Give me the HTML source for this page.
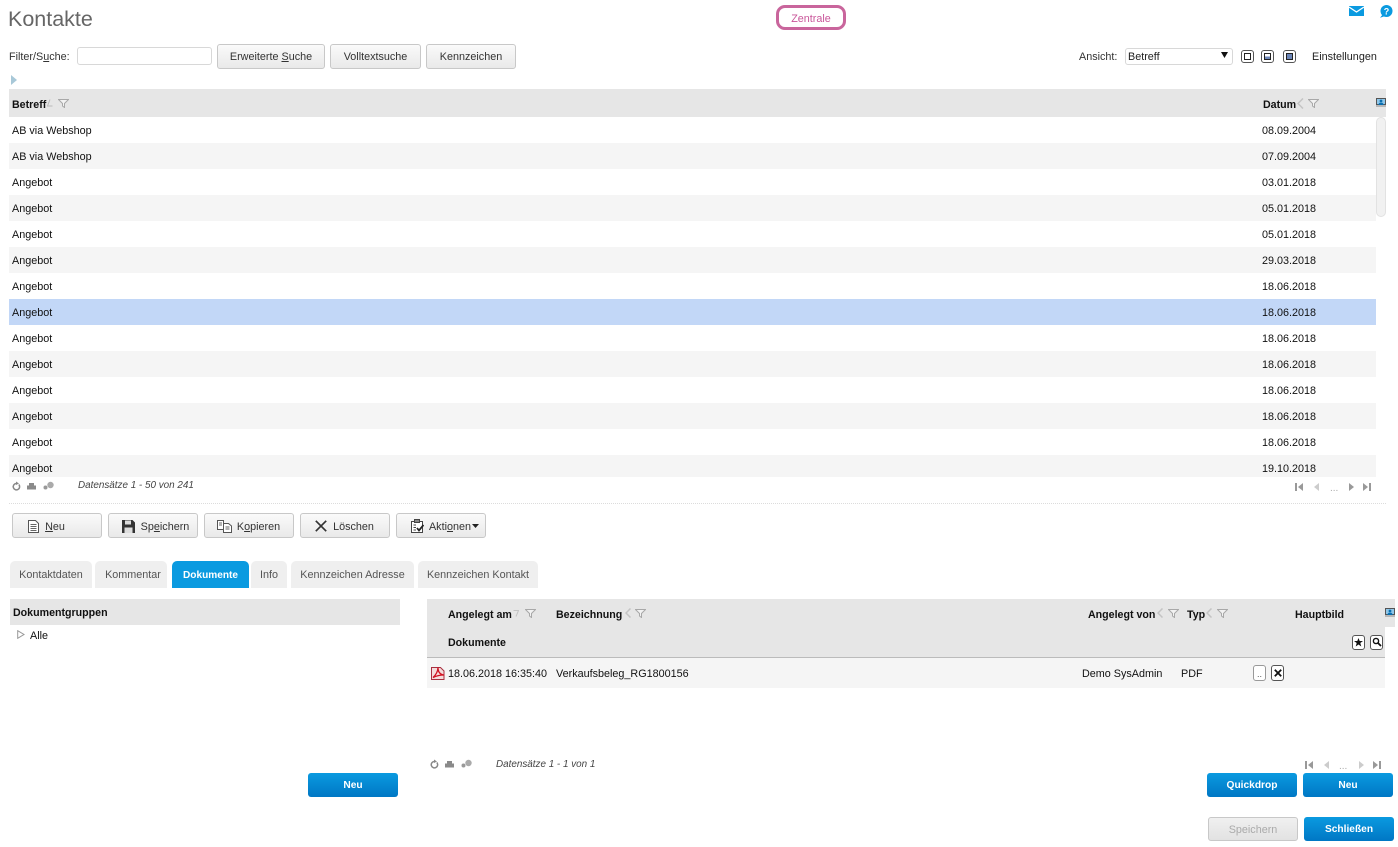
<!DOCTYPE html>
<html lang="de"><head><meta charset="utf-8"><title>Kontakte</title>
<style>
html,body{margin:0;padding:0;background:#fff}
body{width:1398px;height:847px;position:relative;overflow:hidden;font-family:"Liberation Sans",Arial,sans-serif;font-size:10.8px;color:#111}
.a,.t,.b,.r,.tab,.bb{position:absolute}
.t{white-space:nowrap;line-height:14px;height:14px;margin-top:1px}
.h{font-weight:bold;color:#111;font-size:10.65px}
.i{font-style:italic;font-size:10.05px;color:#444}
.b{box-sizing:border-box;height:25px;border:1px solid #c8c8c8;border-radius:3px;background:linear-gradient(#fafafa,#e9e9e9);color:#333;text-align:center;line-height:25px;white-space:nowrap}
.b.m{line-height:26px}
.bb{box-sizing:border-box;height:24px;border-radius:3px;background:linear-gradient(#0a9ae0,#0077c4);color:#fff;font-weight:bold;font-size:10.2px;text-align:center;line-height:25px;white-space:nowrap}
.r{left:9px;width:1367px;height:26px}
.r.o{background:#f5f5f5}
.r.s{background:#c2d7f7}
.tab{top:561px;height:27px;box-sizing:border-box;background:#efefef;color:#555;border-radius:5px 5px 0 0;text-align:center;line-height:29px;white-space:nowrap}
.ib{position:absolute;box-sizing:border-box;border:1px solid #555;border-radius:3px;background:#fff}
svg{position:absolute;display:block}
u{text-decoration:underline}
</style></head><body>

<div class="t" style="left:8px;top:6px;height:26px;line-height:26px;font-size:21.5px;color:#666;margin-top:0">Kontakte</div>
<div class="a" style="left:776px;top:5px;width:70px;height:25px;box-sizing:border-box;border:3px solid #c9659c;border-radius:9px;text-align:center;line-height:23px;color:#c9569a">Zentrale</div>

<svg style="left:1349px;top:6px" width="15" height="10" viewBox="0 0 15 10"><path d="M0 0H15V10H0Z" fill="#0a9ae0"/><path d="M0 1L7.5 6L15 1" fill="none" stroke="#fff" stroke-width="1.3"/></svg>
<svg style="left:1379px;top:5px" width="14" height="13" viewBox="0 0 14 13"><circle cx="7.500" cy="6" r="6" fill="#0a9ae0"/><path d="M4 9L1 12.800L6.500 11Z" fill="#0a9ae0"/><text x="7.500" y="9.500" font-size="9" font-weight="bold" text-anchor="middle" fill="#fff" font-family="Liberation Sans">?</text></svg>

<div class="t" style="left:9px;top:49px;color:#333">Filter/S<u>u</u>che:</div>
<div class="a" style="left:77px;top:47px;width:135px;height:18px;box-sizing:border-box;border:1px solid #d8d8d8;border-radius:3px"></div>
<div class="b" style="left:217px;top:44px;width:108px">Erweiterte <u>S</u>uche</div>
<div class="b" style="left:330px;top:44px;width:91px">Volltextsuche</div>
<div class="b" style="left:426px;top:44px;width:90px">Kennzeichen</div>

<div class="t" style="left:1079px;top:49px;color:#333">Ansicht:</div>
<div class="a" style="left:1125px;top:48px;width:108px;height:17px;box-sizing:border-box;border:1px solid #d8d8d8;border-radius:3px;line-height:16px;padding-left:2px;color:#222">Betreff</div>
<svg style="left:1221px;top:52px" width="7" height="6" viewBox="0 0 7 6"><path d="M0 0H7L3.500 6Z" fill="#111"/></svg>
<div class="ib" style="left:1241px;top:50px;width:13px;height:13px"><div class="a" style="left:2px;top:2px;width:7px;height:7px;border:1px solid #222;box-sizing:border-box"></div></div>
<div class="ib" style="left:1261px;top:50px;width:13px;height:13px"><div class="a" style="left:2px;top:2px;width:7px;height:7px;border:1px solid #222;box-sizing:border-box;background:linear-gradient(#fff 50%,#6c86b8 50%)"></div></div>
<div class="ib" style="left:1283px;top:50px;width:13px;height:13px"><div class="a" style="left:2px;top:2px;width:7px;height:7px;border:1px solid #222;box-sizing:border-box;background:#6c86b8"></div></div>
<div class="t" style="left:1312px;top:49px;color:#222">Einstellungen</div>

<svg style="left:11px;top:75px" width="6" height="10" viewBox="0 0 6 10"><path d="M0 0L6 5L0 10Z" fill="#a8c8d8"/></svg>

<div class="a" style="left:9px;top:89px;width:1377px;height:28px;background:#e6e6e6"></div>
<div class="t h" style="left:12px;top:97px">Betreff</div>
<svg style="left:47px;top:99px" width="6" height="8" viewBox="0 0 6 8"><path d="M3 0.500L0.500 7H5.500" fill="none" stroke="#bbb"/></svg>
<svg style="left:58px;top:99px" width="11" height="9" viewBox="0 0 11 9"><path d="M0.500 0.500H10.500L6.500 4.500V8.500L4.500 7V4.500Z" fill="#f2f2f2" stroke="#a8a8a8"/></svg>
<div class="t h" style="left:1263px;top:97px">Datum</div>
<svg style="left:1297px;top:98px" width="8" height="11" viewBox="0 0 8 11"><path d="M6 0.500L1 5.500L6 10.500" fill="none" stroke="#c4c4c4" stroke-width="1.500"/></svg>
<svg style="left:1308px;top:99px" width="11" height="9" viewBox="0 0 11 9"><path d="M0.500 0.500H10.500L6.500 4.500V8.500L4.500 7V4.500Z" fill="#f2f2f2" stroke="#a8a8a8"/></svg>
<svg style="left:1376px;top:98px" width="10" height="9" viewBox="0 0 10 9"><path d="M0 0H10V7H0Z" fill="#555"/><path d="M1 1H9V6H1Z" fill="#8fc6e8"/><circle cx="5" cy="3" r="1.400" fill="#0a6fb0"/><path d="M2 7L3.500 4.800H6.500L8 7Z" fill="#0a6fb0"/><path d="M0 8H10" stroke="#888"/></svg>

<div class="a" style="left:1376px;top:117px;width:10px;height:360px;background:#fff"></div>
<div class="a" style="left:1376px;top:117px;width:10px;height:100px;box-sizing:border-box;border:1px solid #e2e2e2;border-radius:5px;background:#f1f1f1"></div>

<div class="a" style="left:0;top:117px;width:1376px;height:360px;overflow:hidden">
<div class="r" style="top:0"></div><div class="t" style="left:12px;top:6px">AB via Webshop</div><div class="t" style="left:1262px;top:6px">08.09.2004</div>
<div class="r o" style="top:26px"></div><div class="t" style="left:12px;top:32px">AB via Webshop</div><div class="t" style="left:1262px;top:32px">07.09.2004</div>
<div class="r" style="top:52px"></div><div class="t" style="left:12px;top:58px">Angebot</div><div class="t" style="left:1262px;top:58px">03.01.2018</div>
<div class="r o" style="top:78px"></div><div class="t" style="left:12px;top:84px">Angebot</div><div class="t" style="left:1262px;top:84px">05.01.2018</div>
<div class="r" style="top:104px"></div><div class="t" style="left:12px;top:110px">Angebot</div><div class="t" style="left:1262px;top:110px">05.01.2018</div>
<div class="r o" style="top:130px"></div><div class="t" style="left:12px;top:136px">Angebot</div><div class="t" style="left:1262px;top:136px">29.03.2018</div>
<div class="r" style="top:156px"></div><div class="t" style="left:12px;top:162px">Angebot</div><div class="t" style="left:1262px;top:162px">18.06.2018</div>
<div class="r s" style="top:182px"></div><div class="t" style="left:12px;top:188px">Angebot</div><div class="t" style="left:1262px;top:188px">18.06.2018</div>
<div class="r" style="top:208px"></div><div class="t" style="left:12px;top:214px">Angebot</div><div class="t" style="left:1262px;top:214px">18.06.2018</div>
<div class="r o" style="top:234px"></div><div class="t" style="left:12px;top:240px">Angebot</div><div class="t" style="left:1262px;top:240px">18.06.2018</div>
<div class="r" style="top:260px"></div><div class="t" style="left:12px;top:266px">Angebot</div><div class="t" style="left:1262px;top:266px">18.06.2018</div>
<div class="r o" style="top:286px"></div><div class="t" style="left:12px;top:292px">Angebot</div><div class="t" style="left:1262px;top:292px">18.06.2018</div>
<div class="r" style="top:312px"></div><div class="t" style="left:12px;top:318px">Angebot</div><div class="t" style="left:1262px;top:318px">18.06.2018</div>
<div class="r o" style="top:338px"></div><div class="t" style="left:12px;top:344px">Angebot</div><div class="t" style="left:1262px;top:344px">19.10.2018</div>
</div>

<svg style="left:11px;top:481px" width="50" height="11" viewBox="0 0 50 11"><path d="M7.800 3.500A3.200 3.200 0 1 1 5 2.500" fill="none" stroke="#888" stroke-width="1.500"/><path d="M5 0.500L8 2.500L5 4Z" fill="#888"/><path d="M16 4.500H25V8.500H16Z M18 2H23V4.500H18Z" fill="#8a8a8a"/><circle cx="34.500" cy="6.500" r="2" fill="#999"/><circle cx="39.500" cy="4" r="3.200" fill="#aaa"/></svg>
<div class="t i" style="left:78px;top:478px;margin-top:1px;font-size:9.9px">Datensätze 1 - 50 von 241</div>
<svg style="left:1295px;top:483px" width="78" height="8" viewBox="0 0 78 8"><path d="M0 0H2V8H0Z M8 0V8L3 4Z" fill="#999"/><path d="M24 0V8L19 4Z" fill="#ccc"/><path d="M54 0V8L59 4Z" fill="#999"/><path d="M68 0V8L73 4Z M74 0H76V8H74Z" fill="#999"/></svg>
<div class="t" style="left:1330px;top:481px;color:#aaa;font-size:10px">...</div>

<div class="a" style="left:9px;top:503px;width:1377px;border-top:1px dotted #dcdcdc"></div>

<div class="b m" style="left:12px;top:513px;width:90px;padding-right:4px"><u>N</u>eu</div>
<svg style="left:28px;top:520px" width="11" height="13" viewBox="0 0 11 13"><path d="M0.500 0.500H7.500L10.500 3.500V12.500H0.500Z" fill="#fff" stroke="#555"/><path d="M2.500 4.500H8.500M2.500 6.500H8.500M2.500 8.500H8.500M2.500 10.500H8.500" stroke="#666"/></svg>
<div class="b m" style="left:108px;top:513px;width:90px;padding-left:24px">Sp<u>e</u>ichern</div>
<svg style="left:122px;top:520px" width="13" height="13" viewBox="0 0 13 13"><path d="M0 0H10.500L13 2.500V13H0Z" fill="#333"/><path d="M3 0.500H9V4.500H3Z M2.500 7.500H10.500V13H2.500Z" fill="#ddd"/></svg>
<div class="b m" style="left:204px;top:513px;width:90px;padding-left:19px">K<u>o</u>pieren</div>
<svg style="left:217px;top:520px" width="15" height="13" viewBox="0 0 15 13"><path d="M0.500 0.500H6.500V9.500H0.500Z" fill="#fff" stroke="#555"/><path d="M6.500 3.500H11.500L14.500 6V12.500H6.500Z" fill="#fff" stroke="#555"/><path d="M2 3H5M2 5H5M8.500 7H12.500M8.500 9H12.500" stroke="#666"/></svg>
<div class="b m" style="left:300px;top:513px;width:90px;padding-left:17px">Löschen</div>
<svg style="left:315px;top:520px" width="12" height="12" viewBox="0 0 12 12"><path d="M0.800 0.800L11.200 11.200M11.200 0.800L0.800 11.200" stroke="#333" stroke-width="1.700"/></svg>
<div class="b m" style="left:396px;top:513px;width:90px;padding-left:18px">Akti<u>o</u>nen</div>
<svg style="left:411px;top:519px" width="13" height="14" viewBox="0 0 13 14"><path d="M0.500 2.500H11.500V13.500H0.500Z" fill="#fff" stroke="#444"/><path d="M3.500 0.500H8.500V3.500H3.500Z" fill="#888" stroke="#444"/><path d="M2.500 6H5M2.500 8.500H5M2.500 11H5" stroke="#444"/><path d="M6 9L8 11.500L12.500 6" fill="none" stroke="#222" stroke-width="1.800"/></svg>
<svg style="left:472px;top:524px" width="7" height="4" viewBox="0 0 7 4"><path d="M0 0H7L3.500 4Z" fill="#222"/></svg>

<div class="tab" style="left:10px;width:82px">Kontaktdaten</div>
<div class="tab" style="left:95px;width:72px;padding-left:4px">Kommentar</div>
<div class="tab" style="left:172px;width:77px;background:#0a9ae0;color:#fff;font-weight:bold;font-size:10.1px">Dokumente</div>
<div class="tab" style="left:251px;width:36px">Info</div>
<div class="tab" style="left:291px;width:123px">Kennzeichen Adresse</div>
<div class="tab" style="left:418px;width:120px">Kennzeichen Kontakt</div>

<div class="a" style="left:10px;top:599px;width:390px;height:26px;background:#e6e6e6"></div>
<div class="t h" style="left:13px;top:605px">Dokumentgruppen</div>
<svg style="left:17px;top:630px" width="8" height="9" viewBox="0 0 8 9"><path d="M0.700 0.700L7 4.500L0.700 8.300Z" fill="#fff" stroke="#999"/></svg>
<div class="t" style="left:30px;top:628px">Alle</div>
<div class="bb" style="left:308px;top:773px;width:90px">Neu</div>

<div class="a" style="left:427px;top:599px;width:968px;height:58px;background:#e6e6e6;border-bottom:1px solid #bbb;box-sizing:content-box"></div>
<div class="a" style="left:1385px;top:627px;width:13px;height:61px;background:#fff"></div>
<div class="t h" style="left:448px;top:607px">Angelegt am</div>
<svg style="left:513px;top:610px" width="6" height="7" viewBox="0 0 6 7"><path d="M0.500 0.500H5.500L3 6.500" fill="none" stroke="#c4c4c4"/></svg>
<svg style="left:525px;top:609px" width="11" height="9" viewBox="0 0 11 9"><path d="M0.500 0.500H10.500L6.500 4.500V8.500L4.500 7V4.500Z" fill="#f2f2f2" stroke="#a8a8a8"/></svg>
<div class="t h" style="left:556px;top:607px">Bezeichnung</div>
<svg style="left:625px;top:608px" width="7" height="10" viewBox="0 0 7 10"><path d="M5.500 0.500L1 5L5.500 9.500" fill="none" stroke="#c4c4c4" stroke-width="1.500"/></svg>
<svg style="left:635px;top:609px" width="11" height="9" viewBox="0 0 11 9"><path d="M0.500 0.500H10.500L6.500 4.500V8.500L4.500 7V4.500Z" fill="#f2f2f2" stroke="#a8a8a8"/></svg>
<div class="t h" style="left:1088px;top:607px">Angelegt von</div>
<svg style="left:1157px;top:608px" width="7" height="10" viewBox="0 0 7 10"><path d="M5.500 0.500L1 5L5.500 9.500" fill="none" stroke="#c4c4c4" stroke-width="1.500"/></svg>
<svg style="left:1168px;top:609px" width="11" height="9" viewBox="0 0 11 9"><path d="M0.500 0.500H10.500L6.500 4.500V8.500L4.500 7V4.500Z" fill="#f2f2f2" stroke="#a8a8a8"/></svg>
<div class="t h" style="left:1187px;top:607px">Typ</div>
<svg style="left:1206px;top:608px" width="7" height="10" viewBox="0 0 7 10"><path d="M5.500 0.500L1 5L5.500 9.500" fill="none" stroke="#c4c4c4" stroke-width="1.500"/></svg>
<svg style="left:1217px;top:609px" width="11" height="9" viewBox="0 0 11 9"><path d="M0.500 0.500H10.500L6.500 4.500V8.500L4.500 7V4.500Z" fill="#f2f2f2" stroke="#a8a8a8"/></svg>
<div class="t h" style="left:1295px;top:607px">Hauptbild</div>
<svg style="left:1385px;top:608px" width="10" height="9" viewBox="0 0 10 9"><path d="M0 0H10V7H0Z" fill="#555"/><path d="M1 1H9V6H1Z" fill="#8fc6e8"/><circle cx="5" cy="3" r="1.400" fill="#0a6fb0"/><path d="M2 7L3.500 4.800H6.500L8 7Z" fill="#0a6fb0"/><path d="M0 8H10" stroke="#888"/></svg>
<div class="t h" style="left:448px;top:635px">Dokumente</div>
<div class="ib" style="left:1352px;top:635px;width:13px;height:15px"><svg style="left:1px;top:2px" width="9" height="9" viewBox="0 0 9 9"><path d="M4.500 0L5.700 3H9L6.300 5L7.300 8.500L4.500 6.500L1.700 8.500L2.700 5L0 3H3.300Z" fill="#111"/></svg></div>
<div class="ib" style="left:1370px;top:635px;width:13px;height:15px"><svg style="left:1px;top:1px" width="10" height="10" viewBox="0 0 10 10"><circle cx="4" cy="4" r="2.600" fill="#fff" stroke="#111" stroke-width="1.400"/><path d="M6 6L9 9" stroke="#111" stroke-width="1.800"/></svg></div>

<div class="a" style="left:427px;top:658px;width:958px;height:30px;background:#f5f5f5"></div>
<svg style="left:431px;top:666px" width="14" height="14" viewBox="0 0 14 14"><path d="M0.500 1.500H9.500L13 5V13.500H0.500Z" fill="#f4dcdc" stroke="#a83040"/><path d="M2 11.500C5 9 7 5 7 1.500C7 6 9 8.500 13 9C9 9 5 10 2 11.500Z" fill="none" stroke="#d01020" stroke-width="1.300"/></svg>
<div class="t" style="left:448px;top:666px">18.06.2018 16:35:40</div>
<div class="t" style="left:556px;top:666px">Verkaufsbeleg_RG1800156</div>
<div class="t" style="left:1082px;top:666px">Demo SysAdmin</div>
<div class="t" style="left:1181px;top:666px">PDF</div>
<div class="ib" style="left:1253px;top:665px;width:13px;height:16px;border-color:#999;text-align:center;line-height:16px;font-size:9px;color:#555">..</div>
<div class="ib" style="left:1271px;top:665px;width:13px;height:16px"><svg style="left:2px;top:3px" width="8" height="8" viewBox="0 0 8 8"><path d="M0.800 0.800L7.200 7.200M7.200 0.800L0.800 7.200" stroke="#111" stroke-width="1.800"/></svg></div>

<svg style="left:429px;top:759px" width="50" height="11" viewBox="0 0 50 11"><path d="M7.800 3.500A3.200 3.200 0 1 1 5 2.500" fill="none" stroke="#888" stroke-width="1.500"/><path d="M5 0.500L8 2.500L5 4Z" fill="#888"/><path d="M16 4.500H25V8.500H16Z M18 2H23V4.500H18Z" fill="#8a8a8a"/><circle cx="34.500" cy="6.500" r="2" fill="#999"/><circle cx="39.500" cy="4" r="3.200" fill="#aaa"/></svg>
<div class="t i" style="left:496px;top:757px;font-size:9.9px">Datensätze 1 - 1 von 1</div>
<svg style="left:1305px;top:761px" width="78" height="8" viewBox="0 0 78 8"><path d="M0 0H2V8H0Z M8 0V8L3 4Z" fill="#999"/><path d="M24 0V8L19 4Z" fill="#ccc"/><path d="M54 0V8L59 4Z" fill="#ccc"/><path d="M68 0V8L73 4Z M74 0H76V8H74Z" fill="#999"/></svg>
<div class="t" style="left:1339px;top:759px;color:#aaa;font-size:10px">...</div>

<div class="bb" style="left:1207px;top:773px;width:90px">Quickdrop</div>
<div class="bb" style="left:1303px;top:773px;width:90px">Neu</div>
<div class="b" style="left:1208px;top:817px;width:90px;height:24px;line-height:24px;color:#aaa;background:linear-gradient(#f0f0f0,#e2e2e2)">Speichern</div>
<div class="bb" style="left:1304px;top:817px;width:90px">Schließen</div>

</body></html>
